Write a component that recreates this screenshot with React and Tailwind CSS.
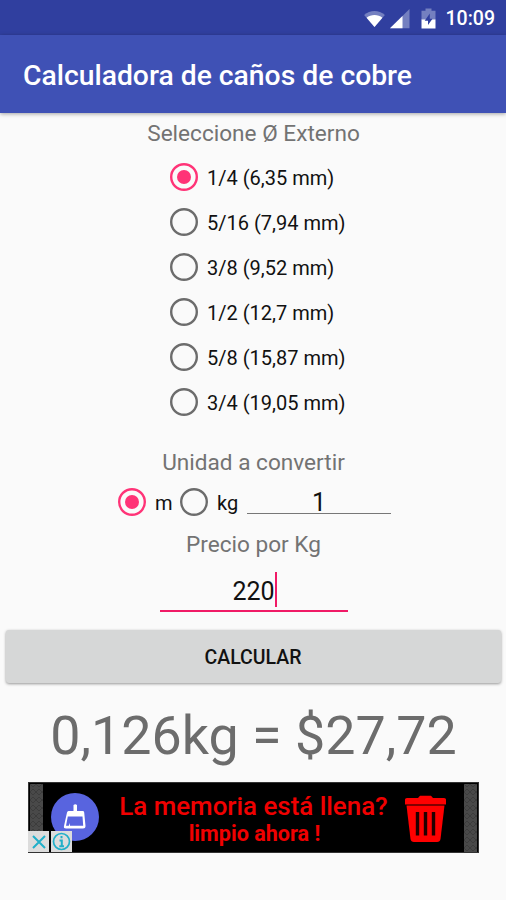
import {useState} from 'react';

const sizes = [
	{id:'1/4',name:'1/4 (6,35 mm)'},
	{id:'5/16',name:'5/16 (7,94 mm)'},
	{id:'3/8',name:'3/8 (9,52 mm)'},
	{id:'1/2',name:'1/2 (12,7 mm)'},
	{id:'5/8',name:'5/8 (15,87 mm)'},
	{id:'3/4',name:'3/4 (19,05 mm)'},
]

function Radio({checked}) {
	return (
		<svg viewBox="0 0 28 28" className="h-7 w-7 shrink-0">
			<circle cx="14" cy="14" r="12.8" fill="none" stroke={checked ? '#ff3377':'#6c6c6c'} strokeWidth="2.4"/>
			{checked && <circle cx="14" cy="14" r="7" fill="#ff3377"/>}
		</svg>
	)
}

function StatusBar() {
	return (
		<div className="flex h-[35px] items-center justify-end bg-[#303f9f] pt-[2px] pr-[11px]">
			<svg viewBox="0 0 24 20" className="mr-[4px] h-[18px] w-[23px]">
				<path d="M0.5 5.5 C7 -0.2 17 -0.2 23.5 5.5 L12 19 Z" fill="#7480c0"/>
				<path d="M3.2 8.5 C8 4.7 16 4.7 20.8 8.5 L12 19 Z" fill="#fff"/>
			</svg>
			<svg viewBox="0 0 20 20" className="mr-[11px] h-5 w-5">
				<path d="M0 19.2 L19.5 0 V19.2 Z" fill="#7480c0"/>
				<path d="M0 19.2 L12.5 7 V19.2 Z" fill="#fff"/>
			</svg>
			<svg viewBox="0 0 15 21" className="mr-[10px] h-[21px] w-[15px]">
				<path d="M4.5 0.5 H10.5 V2.8 H14.5 V12 H0.5 V2.8 H4.5 Z" fill="#7480c0"/>
				<path d="M0.5 11.5 H14.5 V20.5 H0.5 Z" fill="#fff"/>
				<path d="M8.8 5.5 L3.7 12.7 H7 V17 L11.5 10.7 H8.8 Z" fill="#303f9f"/>
			</svg>
			<span className="text-[19.5px] leading-none font-medium text-white">10:09</span>
		</div>
	)
}

function AdBanner() {
	return (
		<div className="relative mx-auto mt-[13px] flex h-[71px] w-[451px] border border-[#333] bg-black">
			<svg className="mt-px ml-px h-[68px] w-[13px] shrink-0">
				<defs>
					<pattern id="mesh" width="6" height="8" patternUnits="userSpaceOnUse">
						<rect width="6" height="8" fill="#494949"/>
						<path d="M0 0 L3 3 L6 0 M0 8 L3 5 L6 8" stroke="#3c3c3c" fill="none"/>
					</pattern>
				</defs>
				<rect width="13" height="68" fill="url(#mesh)"/>
			</svg>
			<svg viewBox="0 0 48 48" className="mt-[10px] ml-[8px] h-12 w-12 shrink-0">
				<circle cx="24" cy="24" r="24" fill="#5864df"/>
				<path d="M22.5 12 Q24.3 10.5 26 12 V18 H32 Q33.2 18 33.2 19.5 L34.5 33 Q34.5 35.5 32 35.5 H15 Q12.3 35.5 13 33 L16 19.5 Q16.3 18 17.5 18 H22.5 Z" fill="#fff"/>
				<path d="M16.8 23.5 H31.5 L32.2 32.8 H19 V30 L17.8 32.8 H15 Z" fill="#5864df"/>
			</svg>
			<div className="ml-[19px] flex w-[272px] flex-col items-center whitespace-nowrap text-[#f00000]">
				<p className="mt-[9px] text-[25.9px] leading-[28px] font-medium">La memoria está llena?</p>
				<p className="pl-[2px] text-[21.6px] leading-[28px] font-bold">limpio ahora !</p>
			</div>
			<svg viewBox="0 0 43 48" className="mt-[12px] ml-[14px] h-12 w-[43px] shrink-0">
				<path d="M1 4.5 Q1 3 3 3 H14 L16 0.8 H27 L29 3 H40 Q42 3 42 4.5 V9.5 H1 Z" fill="#f00"/>
				<path d="M2.5 10.5 H40.5 L36.5 44 Q36 47 33 47 H10 Q7 47 6.5 44 Z" fill="#f00"/>
				<path d="M13.5 17 V40.5 M21.5 17 V40.5 M29.5 17 V40.5" stroke="#220000" strokeWidth="3.4"/>
			</svg>
			<svg className="absolute top-px right-px h-[68px] w-[13px]">
				<rect width="13" height="68" fill="url(#mesh)"/>
			</svg>
			<div className="absolute bottom-0 left-[-1px] flex gap-[2px]">
				<svg viewBox="0 0 21 21" className="h-[21px] w-[21px] bg-[#dcdcdc]">
					<path d="M5 5 L17 17 M17 5 L5 17" stroke="#20afc9" strokeWidth="2"/>
				</svg>
				<svg viewBox="0 0 21 21" className="h-[21px] w-[21px] bg-[#dcdcdc]">
					<circle cx="10.5" cy="10.5" r="8" fill="none" stroke="#20afc9" strokeWidth="1.7"/>
					<path d="M10.5 5 V7.3 M8.5 9.5 H10.8 V15 M8.3 15.3 H13" stroke="#20afc9" strokeWidth="2" fill="none"/>
				</svg>
			</div>
		</div>
	)
}

export default function App() {
	const [size,setSize] = useState('1/4')
	const [unit,setUnit] = useState('m')

	return (
		<div className="h-[900px] w-[506px] overflow-hidden bg-[#fafafa] font-['Roboto',sans-serif] text-[#111]">
			<StatusBar />
			<header className="relative flex h-[78px] items-center bg-[#3f51b5] px-[23px] pt-[5px] shadow-[0_1px_4px_rgba(0,0,0,0.35)]">
				<h1 className="text-[28.3px] leading-none font-medium whitespace-nowrap text-white">Calculadora de caños de cobre</h1>
			</header>

			<h2 className="flex h-[41px] items-center justify-center pl-px text-[22.6px] text-[#737373]">Seleccione Ø Externo</h2>
			<div className="ml-[170px] flex flex-col">
				{
					sizes.map((item)=>(
						<div key={item.id} onClick={()=>setSize(item.id)} className="flex h-[45px] cursor-pointer items-center gap-[9px]">
							<Radio checked={size === item.id}/>
							<span className="pt-[2px] text-[20px] whitespace-nowrap">{item.name}</span>
						</div>
					))
				}
			</div>

			<h2 className="mt-[22px] flex h-[32px] items-center justify-center pt-[2px] pl-px text-[22.6px] text-[#737373]">Unidad a convertir</h2>
			<div className="ml-[118px] flex h-[48px] items-center">
				<div onClick={()=>setUnit('m')} className="flex w-[62px] cursor-pointer items-center gap-[9px]">
					<Radio checked={unit === 'm'}/>
					<span className="pt-[2px] text-[20px]">m</span>
				</div>
				<div onClick={()=>setUnit('kg')} className="flex w-[67px] cursor-pointer items-center gap-[9px]">
					<Radio checked={unit === 'kg'}/>
					<span className="pt-[2px] text-[20px]">kg</span>
				</div>
				<div className="flex h-[24px] w-[144px] items-center justify-center border-b border-[#777] pt-[3px] text-[25px]">1</div>
			</div>

			<h2 className="mt-[2px] flex h-[32px] items-center justify-center pt-[2px] pl-px text-[22.6px] text-[#737373]">Precio por Kg</h2>
			<div className="ml-[160px] mt-[11px] flex h-[41px] w-[188px] justify-center border-b-2 border-[#f01a66] pl-px text-[25px]">
				<span className="leading-[41px]">220</span>
				<span className="mt-[1px] h-[35px] w-[2px] bg-[#f01a66]"/>
			</div>

			<button className="mx-auto mt-[18px] block h-[53px] w-[495px] rounded-[3px] bg-[#d6d7d7] pt-[2px] text-[19.5px] font-medium shadow-[0_1px_3px_rgba(0,0,0,0.4)]">CALCULAR</button>
			<p className="mt-[20px] pl-px text-center text-[53.8px] leading-[66px] text-[#6c6c6c]">0,126kg = $27,72</p>
			<AdBanner />
		</div>
	)
}
